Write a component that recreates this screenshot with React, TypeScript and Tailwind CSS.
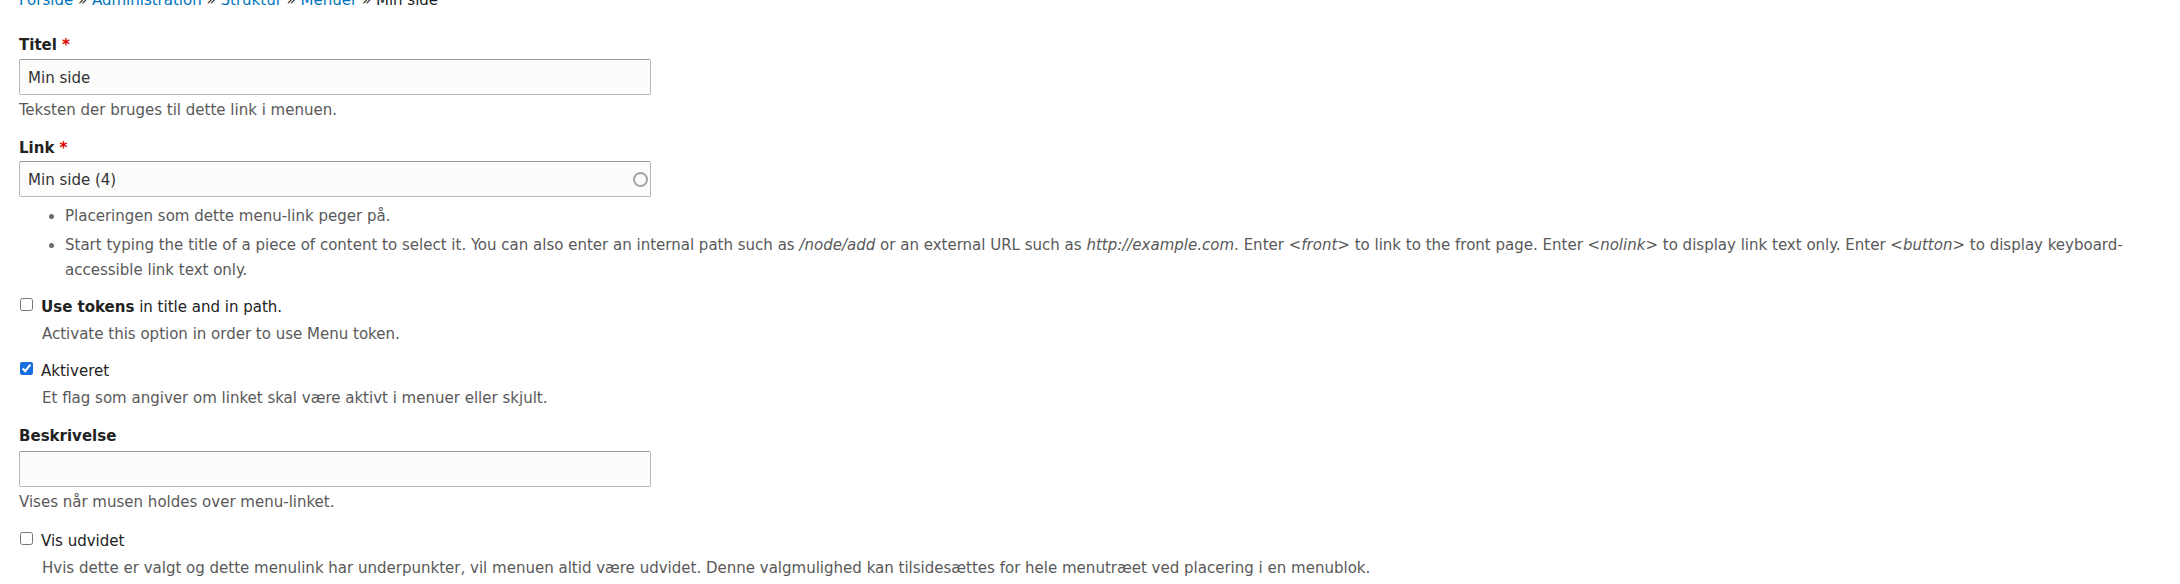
import React from 'react';

const font = "font-['DejaVu_Sans_Condensed','DejaVu_Sans',sans-serif]";

const Label: React.FC<{ text: string; required?: boolean; className?: string }> = ({ text, required, className }) => (
  <div className={`text-[16.7px] leading-[20px] font-bold text-[#222222] ${className || ''}`}>
    {text}
    {required && <span className="ml-[5px] text-[#e00000] font-bold">*</span>}
  </div>
);

const TextInput: React.FC<{ value?: string; throbber?: boolean; className?: string }> = ({ value, throbber, className }) => (
  <div className={`relative w-[632px] ${className || ''}`}>
    <input
      type="text"
      defaultValue={value}
      className={`${font} block w-full h-[36px] px-[8px] text-[16.7px] text-[#333333] bg-[#fcfcfa] border border-[#b8b8b8] border-t-[#999999] rounded-[2px] outline-none`}
    />
    {throbber && (
      <span className="absolute right-[3px] top-[11px] w-[15px] h-[15px] rounded-full border-2 border-[#a3a3a3]" />
    )}
  </div>
);

const Help: React.FC<{ children: React.ReactNode; className?: string }> = ({ children, className }) => (
  <div className={`text-[16.7px] leading-[20px] text-[#595959] ${className || ''}`}>{children}</div>
);

const Check: React.FC<{ checked?: boolean; label: React.ReactNode; desc: string; className?: string }> = ({ checked, label, desc, className }) => (
  <div className={className}>
    <label className="flex items-start">
      <input
        type="checkbox"
        defaultChecked={checked}
        className="mt-[2px] ml-[1px] w-[13px] h-[13px] accent-[#1a6fe0]"
      />
      <span className="ml-[8px] text-[16.7px] leading-[20px] text-[#222222]">{label}</span>
    </label>
    <Help className="mt-[7px] pl-[23px]">{desc}</Help>
  </div>
);

const Bullet = () => (
  <span className="w-[46px] shrink-0 flex justify-end pr-[11px] pt-[11px]">
    <span className="block w-[5px] h-[5px] rounded-full bg-[#6b6b6b]" />
  </span>
);

const App: React.FC = () => {
  return (
    <div className={`${font} bg-white min-h-[584px] px-[19px] overflow-hidden`}>
      <div className="-mt-[11px] text-[16.7px] leading-[20px] text-[#222222]">
        <a href="#" className="text-[#0074bd]">Forside</a> »{' '}
        <a href="#" className="text-[#0074bd]">Administration</a> »{' '}
        <a href="#" className="text-[#0074bd]">Struktur</a> »{' '}
        <a href="#" className="text-[#0074bd]">Menuer</a> » Min side
      </div>

      <Label text="Titel" required className="mt-[25px]" />
      <TextInput value="Min side" className="mt-[5px]" />
      <Help className="mt-[4px]">Teksten der bruges til dette link i menuen.</Help>

      <Label text="Link" required className="mt-[18px]" />
      <TextInput value="Min side (4)" throbber className="mt-[4px]" />
      <ul className="mt-[6px] text-[16.7px] leading-[25px] text-[#595959]">
        <li className="flex">
          <Bullet />
          <span>Placeringen som dette menu-link peger på.</span>
        </li>
        <li className="flex mt-[4px]">
          <Bullet />
          <span>
            Start typing the title of a piece of content to select it. You can also enter an internal path such as{' '}
            <em>/node/add</em> or an external URL such as <em>http://example.com</em>. Enter <em>&lt;front&gt;</em> to
            link to the front page. Enter <em>&lt;nolink&gt;</em> to display link text only. Enter{' '}
            <em>&lt;button&gt;</em> to display keyboard-
            <br />
            accessible link text only.
          </span>
        </li>
      </ul>

      <Check
        className="mt-[14px]"
        label={
          <>
            <strong className="font-bold">Use tokens</strong> in title and in path.
          </>
        }
        desc="Activate this option in order to use Menu token."
      />
      <Check
        className="mt-[17px]"
        checked
        label="Aktiveret"
        desc="Et flag som angiver om linket skal være aktivt i menuer eller skjult."
      />

      <Label text="Beskrivelse" className="mt-[18px]" />
      <TextInput className="mt-[6px]" />
      <Help className="mt-[4px]">Vises når musen holdes over menu-linket.</Help>

      <Check
        className="mt-[19px]"
        label="Vis udvidet"
        desc="Hvis dette er valgt og dette menulink har underpunkter, vil menuen altid være udvidet. Denne valgmulighed kan tilsidesættes for hele menutræet ved placering i en menublok."
      />
    </div>
  );
};

export default App;
